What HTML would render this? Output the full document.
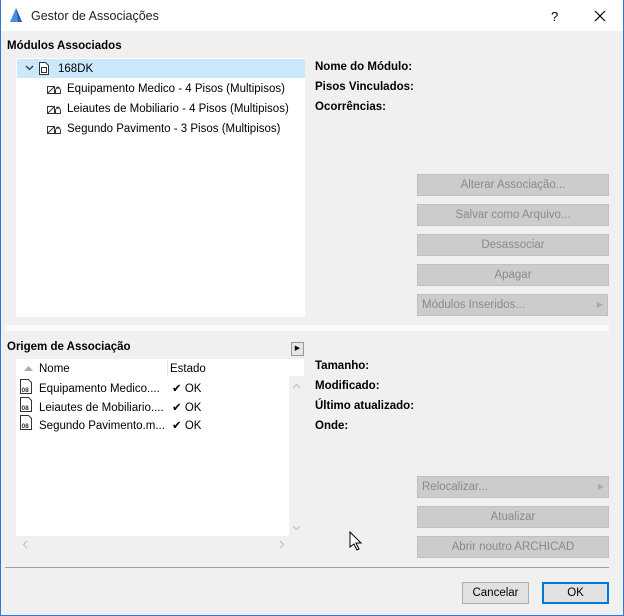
<!DOCTYPE html><html><head><style>
body{margin:0;width:624px;height:616px;overflow:hidden;font-family:"Liberation Sans",sans-serif;font-size:11.5px;color:#000;background:#f0f0f0;position:relative}
.a{position:absolute}
.b{font-weight:bold}
.btn{position:absolute;left:417px;width:192px;background:#ccc;border:1px solid #c0c0c0;color:#8a8a8a;text-align:center;line-height:20px;box-sizing:border-box;height:22px}
.row{position:absolute;left:67px;font-size:11.5px}
</style></head><body>
<div class="a" style="left:0;top:0;width:624px;height:31px;background:#fff"></div>
<div class="a" style="left:0;top:0;width:1px;height:616px;background:#2b79d6"></div>
<div class="a" style="right:0;top:0;width:1px;height:616px;background:#2b79d6"></div>
<div class="a" style="left:0;bottom:0;width:624px;height:1px;background:#2b79d6"></div>
<svg class="a" style="left:9px;top:7px" width="14" height="16"><path d="M1 15 L7 1 L13 15 Z" fill="#4a90e2"/><path d="M7 1 L13 15 L9 15 Z" fill="#1b5fb5"/></svg>
<div class="a" style="left:31px;top:9px;font-size:12.5px;color:#222">Gestor de Associações</div>
<div class="a" style="left:551px;top:9px;font-size:13px">?</div>
<svg class="a" style="left:594px;top:10px" width="12" height="12"><path d="M1 1L11 11M11 1L1 11" stroke="#000" stroke-width="1.2"/></svg>
<div class="a b" style="left:7px;top:40px">Módulos Associados</div>
<div class="a" style="left:16px;top:58px;width:289px;height:259px;background:#fff"></div>
<div class="a" style="left:17px;top:59px;width:288px;height:19px;background:#cce8ff"></div>
<svg class="a" style="left:25px;top:65px" width="9" height="6"><path d="M1 1l3.5 3.5L8 1" fill="none" stroke="#333" stroke-width="1.3"/></svg>
<svg class="a" style="left:38px;top:61px" width="12" height="15"><path d="M1.5 1.5h6l3 3v9h-9z" fill="#fff" stroke="#333"/><rect x="3.5" y="6.5" width="5" height="5" fill="none" stroke="#333"/></svg>
<div class="a" style="left:58px;top:63px">168DK</div>
<div class="row" style="top:83px">Equipamento Medico - 4 Pisos (Multipisos)</div>
<div class="row" style="top:103px">Leiautes de Mobiliario - 4 Pisos (Multipisos)</div>
<div class="row" style="top:123px">Segundo Pavimento - 3 Pisos (Multipisos)</div>
<svg class="a" style="left:47px;top:84px" width="16" height="50"><g fill="none" stroke="#333"><g id="i"><rect x="0.5" y="2.5" width="7" height="7"/><path d="M1 9L7 3"/><path d="M8.5 9.5v-3a2.5 2.5 0 0 1 5 0v3z M9.5 4.5a1.5 1.5 0 1 1 3 0"/></g><use href="#i" y="20"/><use href="#i" y="40"/></g></svg>
<div class="a b" style="left:315px;top:61px">Nome do Módulo:</div>
<div class="a b" style="left:315px;top:81px">Pisos Vinculados:</div>
<div class="a b" style="left:315px;top:101px">Ocorrências:</div>
<div class="btn" style="top:174px">Alterar Associação...</div>
<div class="btn" style="top:204px">Salvar como Arquivo...</div>
<div class="btn" style="top:234px">Desassociar</div>
<div class="btn" style="top:264px">Apagar</div>
<div class="btn" style="top:294px;width:191px;text-align:left;padding-left:4px">Módulos Inseridos...<span style="position:absolute;right:4px;font-size:8px;color:#aaa">▶</span></div>
<div class="a" style="left:5px;top:325px;width:604px;height:6px;background:#fafafa"></div>
<div class="a b" style="left:7px;top:341px">Origem de Associação</div>
<div class="a" style="left:291px;top:342px;width:11px;height:12px;border:1px solid #999;background:#e5e5e5;font-size:7px;text-align:center;line-height:12px">▶</div>
<div class="a" style="left:16px;top:359px;width:288px;height:181px;background:#fff"></div>
<div class="a" style="left:289px;top:376px;width:15px;height:160px;background:#f0f0f0"></div>
<div class="a" style="left:16px;top:536px;width:288px;height:15px;background:#f0f0f0"></div>
<div class="a" style="left:167px;top:360px;width:1px;height:16px;background:#e5e5e5"></div>
<svg class="a" style="left:24px;top:366px" width="9" height="5"><path d="M0 5L4.5 0L9 5z" fill="#aaa"/></svg>
<div class="a" style="left:39px;top:363px">Nome</div>
<div class="a" style="left:170px;top:363px">Estado</div>
<svg class="a" style="left:292px;top:383px" width="9" height="6"><path d="M1 5l3.5-3.5L8 5" fill="none" stroke="#bbb"/></svg>
<svg class="a" style="left:292px;top:525px" width="9" height="6"><path d="M1 1l3.5 3.5L8 1" fill="none" stroke="#bbb"/></svg>
<svg class="a" style="left:22px;top:540px" width="6" height="9"><path d="M5 1L1.5 4.5L5 8" fill="none" stroke="#bbb"/></svg>
<svg class="a" style="left:279px;top:540px" width="6" height="9"><path d="M1 1l3.5 3.5L1 8" fill="none" stroke="#bbb"/></svg>
<svg class="a" style="left:19px;top:378px" width="15" height="56"><g fill="#fff" stroke="#333"><path d="M1.5 1.5h8l3 3v11h-11z"/><path d="M1.5 19.5h8l3 3v11h-11z"/><path d="M1.5 37.5h8l3 3v11h-11z"/></g><g font-size="6.5" font-weight="bold" font-family="Liberation Sans" fill="#333"><text x="2.5" y="14">08</text><text x="2.5" y="32">08</text><text x="2.5" y="50">08</text></g></svg>
<div class="a" style="left:39px;top:380px;line-height:18.5px">Equipamento Medico....<br>Leiautes de Mobiliario....<br>Segundo Pavimento.m...</div>
<div class="a" style="left:172px;top:380px;line-height:18.5px">✔ OK<br>✔ OK<br>✔ OK</div>
<div class="a b" style="left:315px;top:360px">Tamanho:</div>
<div class="a b" style="left:315px;top:380px">Modificado:</div>
<div class="a b" style="left:315px;top:400px">Último atualizado:</div>
<div class="a b" style="left:315px;top:420px">Onde:</div>
<div class="btn" style="top:476px;text-align:left;padding-left:4px">Relocalizar...<span style="position:absolute;right:4px;font-size:8px;color:#aaa">▶</span></div>
<div class="btn" style="top:506px">Atualizar</div>
<div class="btn" style="top:536px">Abrir noutro ARCHICAD</div>
<div class="a" style="left:5px;top:567px;width:604px;height:1px;background:#a0a0a0"></div>
<div class="a" style="left:462px;top:582px;width:67px;height:22px;box-sizing:border-box;border:1px solid #adadad;background:#e1e1e1;text-align:center;line-height:21px">Cancelar</div>
<div class="a" style="left:542px;top:582px;width:67px;height:22px;box-sizing:border-box;border:2px solid #0078d7;background:#e1e1e1;text-align:center;line-height:19px">OK</div>
<svg class="a" style="left:349px;top:531px" width="14" height="20"><path d="M1 1v15l4-3 3 6 2-1-3-6h5z" fill="#fff" stroke="#000"/></svg>
</body></html>
